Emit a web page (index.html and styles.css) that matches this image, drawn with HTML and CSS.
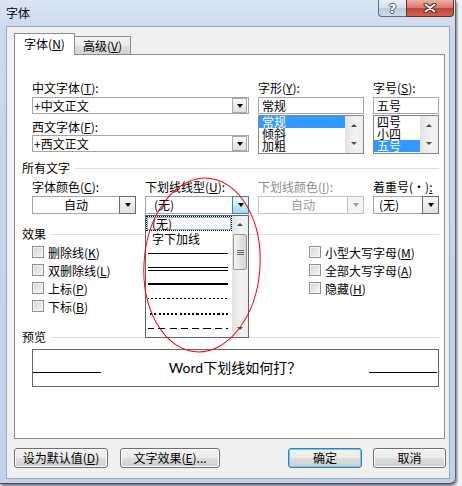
FILE: index.html
```html
<!DOCTYPE html>
<html lang="zh-CN">
<head>
    <meta charset="UTF-8">
    <title>字体</title>
    <link rel="stylesheet" href="styles.css">
</head>
<body>

    <!-- Dialog window -->
    <div class="window">
        <div class="titlebar">
            <span class="title">字体</span>
            <div class="caption-btns">
                <span class="cap-btn help">?</span>
                <span class="cap-btn close">
                    <svg width="14" height="10" viewBox="0 0 14 10">
                        <path d="M2.5 1.5 L11.5 8.5 M11.5 1.5 L2.5 8.5" stroke="#5a1d16" stroke-width="4" stroke-linecap="round"/>
                        <path d="M2.5 1.5 L11.5 8.5 M11.5 1.5 L2.5 8.5" stroke="#fff" stroke-width="2" stroke-linecap="round"/>
                    </svg>
                </span>
            </div>
        </div>

        <div class="client">
            <div class="tabs">
                <span class="tab active">字体(<u>N</u>)</span>
                <span class="tab">高级(<u>V</u>)</span>
            </div>

            <div class="panel">
                <!-- Font name / style / size -->
                <div class="fields">
                    <div class="col-wide">
                        <label class="lbl">中文字体(<u>T</u>):</label>
                        <div class="combo gap1"><span class="combo-val">+中文正文</span><span class="drop"></span></div>
                        <label class="lbl second">西文字体(<u>F</u>):</label>
                        <div class="combo"><span class="combo-val">+西文正文</span><span class="drop"></span></div>
                    </div>
                    <div class="col">
                        <label class="lbl">字形(<u>Y</u>):</label>
                        <div class="textbox">常规</div>
                        <div class="listbox">
                            <div class="list-items">
                                <div class="list-item selected">常规</div>
                                <div class="list-item">倾斜</div>
                                <div class="list-item">加粗</div>
                            </div>
                            <div class="scrollbar">
                                <span class="sb-btn"><i class="arrow-up"></i></span>
                                <span class="sb-btn"><i class="arrow-down"></i></span>
                            </div>
                        </div>
                    </div>
                    <div class="col">
                        <label class="lbl">字号(<u>S</u>):</label>
                        <div class="textbox">五号</div>
                        <div class="listbox">
                            <div class="list-items">
                                <div class="list-item">四号</div>
                                <div class="list-item">小四</div>
                                <div class="list-item selected">五号</div>
                            </div>
                            <div class="scrollbar">
                                <span class="sb-btn"><i class="arrow-up"></i></span>
                                <span class="sb-btn"><i class="arrow-down"></i></span>
                            </div>
                        </div>
                    </div>
                </div>

                <!-- All text -->
                <div class="section first">所有文字</div>
                <div class="fields attrs">
                    <div class="col">
                        <label class="lbl">字体颜色(<u>C</u>):</label>
                        <div class="combo tall gap1"><span class="combo-val center">自动</span><span class="drop"></span></div>
                    </div>
                    <div class="col">
                        <label class="lbl">下划线线型(<u>U</u>):</label>
                        <div class="combo tall gap1"><span class="combo-val pad9">(无)</span><span class="drop hot"></span></div>
                    </div>
                    <div class="col">
                        <label class="lbl disabled">下划线颜色(<u>I</u>):</label>
                        <div class="combo tall gap1 off"><span class="combo-val center">自动</span><span class="drop"></span></div>
                    </div>
                    <div class="col">
                        <label class="lbl">着重号(·)<u>:</u></label>
                        <div class="combo tall gap1"><span class="combo-val pad5">(无)</span><span class="drop"></span></div>
                    </div>
                </div>

                <!-- Effects -->
                <div class="section effects-title">效果</div>
                <div class="effects">
                    <div class="check"><span class="box"></span><span>删除线(<u>K</u>)</span></div>
                    <div class="check"><span class="box"></span><span>双删除线(<u>L</u>)</span></div>
                    <div class="check"><span class="box"></span><span>上标(<u>P</u>)</span></div>
                    <div class="check"><span class="box"></span><span>下标(<u>B</u>)</span></div>
                    <div class="check"><span class="box"></span><span>小型大写字母(<u>M</u>)</span></div>
                    <div class="check"><span class="box"></span><span>全部大写字母(<u>A</u>)</span></div>
                    <div class="check"><span class="box"></span><span>隐藏(<u>H</u>)</span></div>
                </div>

                <!-- Preview -->
                <div class="section preview-title">预览</div>
                <div class="preview">
                    <span class="pv-line"></span>
                    <span class="pv-text">Word下划线如何打？</span>
                    <span class="pv-line"></span>
                </div>

                <!-- Open underline style list -->
                <div class="ddlist">
                    <div class="ddl-items">
                        <div class="ddl-item focus">(无)</div>
                        <div class="ddl-item">字下加线</div>
                        <div class="ddl-item"><span class="ln single"></span></div>
                        <div class="ddl-item"><span class="ln double"></span></div>
                        <div class="ddl-item"><span class="ln thick"></span></div>
                        <div class="ddl-item"><span class="ln dotted"></span></div>
                        <div class="ddl-item"><span class="ln heavy-dotted"></span></div>
                        <div class="ddl-item"><span class="ln dashed"></span></div>
                    </div>
                    <div class="ddl-scroll">
                        <span class="ds-btn"><i class="arrow-up"></i></span>
                        <span class="thumb"><i></i><i></i><i></i></span>
                        <span class="ds-track"></span>
                        <span class="ds-btn"><i class="arrow-down"></i></span>
                    </div>
                </div>
            </div>

            <div class="buttons">
                <span class="btn">设为默认值(<u>D</u>)</span>
                <span class="btn wide">文字效果(<u>E</u>)...</span>
                <span class="spacer"></span>
                <span class="btn ok default">确定</span>
                <span class="btn ok">取消</span>
            </div>
        </div>
    </div>

    <!-- Red hand-drawn circle -->
    <svg class="markup" width="462" height="486" viewBox="0 0 462 486">
        <ellipse cx="202" cy="265" rx="58" ry="87" transform="rotate(4 202 265)" fill="none" stroke="#ff0000" stroke-width="1"/>
    </svg>

</body>
</html>
```

FILE: styles.css
```css
/* Reset */
* { margin: 0; padding: 0; box-sizing: border-box; }

body {
    width: 462px;
    height: 486px;
    overflow: hidden;
    position: relative;
    background: #f3f4f6;
    font-family: "Noto Sans CJK SC", sans-serif;
    font-size: 12px;
    color: #000;
}

u { text-decoration: underline; text-underline-offset: 1px; }

/* Window frame */
.window {
    width: 456px;
    height: 484px;
    background: linear-gradient(#dbe6f4, #c9d9ed 30px, #c0d3ea);
    border-right: 1px solid #53657b;
    border-bottom: 1px solid #3d4a5a;
    border-bottom-right-radius: 6px;
    box-shadow: 1px 2px 3px rgba(0, 0, 0, 0.55);
}

.titlebar {
    height: 26px;
    display: flex;
    justify-content: space-between;
    align-items: flex-start;
}

.title { padding-left: 6px; line-height: 25px; }

.caption-btns { display: flex; margin-right: 1px; }

.cap-btn {
    height: 17px;
    display: flex;
    align-items: center;
    justify-content: center;
    border: 1px solid #5d6e84;
    border-top: none;
}

.help {
    width: 28px;
    border-right: none;
    border-bottom-left-radius: 4px;
    background: linear-gradient(#e9eff7, #d3dfed 50%, #bccbe0 51%, #cbd9ea);
    color: #fff;
    font: bold 13px "DejaVu Sans", sans-serif;
    text-shadow: 1px 0 #47586e, -1px 0 #47586e, 0 1px #47586e, 0 -1px #47586e;
}

.close {
    width: 48px;
    border-color: #6f2c23;
    border-bottom-right-radius: 4px;
    background: linear-gradient(#eab0a6, #d77769 50%, #c14432 51%, #d1634e);
}

/* Client area */
.client {
    margin-left: 6px;
    width: 444px;
    height: 453px;
    padding: 6px 4px 0 7px;
    background: #f0f0f0;
    border: 1px solid #97aac1;
}

/* Tabs */
.tabs {
    display: flex;
    align-items: flex-end;
    height: 22px;
    margin-bottom: -1px;
}

.tab {
    width: 57px;
    height: 19px;
    margin-left: -1px;
    line-height: 17px;
    text-align: center;
    border: 1px solid #898c95;
    border-bottom: none;
    background: linear-gradient(#f3f3f3, #ebebeb 50%, #dedede 51%, #d4d4d4);
}

.tab.active {
    width: 61px;
    height: 22px;
    margin-left: 0;
    line-height: 20px;
    background: #fff;
    position: relative;
    z-index: 1;
}

/* Tab panel */
.panel {
    position: relative;
    height: 385px;
    padding: 25px 5px 0 7px;
    background: #fff;
    border: 1px solid #898c95;
}

.fields {
    display: grid;
    grid-template-columns: 104px 104px 106px 66px;
    column-gap: 9px;
    margin-left: 10px;
}

.col-wide { grid-column: span 2; }

.lbl { display: block; line-height: 16px; white-space: nowrap; }
.lbl.second { margin-top: 5px; }
.lbl.disabled { color: #8d8d8d; }

/* Combo boxes */
.combo {
    display: flex;
    height: 17px;
    border: 1px solid #a5a5a5;
    background: #fff;
}

.combo.gap1 { margin-top: 1px; }
.combo.tall { height: 18px; }

.combo-val { flex: 1; padding-left: 1px; line-height: 15px; white-space: nowrap; }
.combo.tall .combo-val { line-height: 16px; }
.combo-val.center { text-align: center; padding-left: 0; }
.combo-val.pad9 { padding-left: 8px; }
.combo-val.pad5 { padding-left: 5px; }

.drop {
    width: 15px;
    margin-right: 1px;
    display: flex;
    align-items: center;
    justify-content: center;
    border: 1px solid #a9a9a9;
    background: linear-gradient(#f7f7f7, #e0e0e0);
}

.drop::after {
    content: "";
    border-left: 3.5px solid transparent;
    border-right: 3.5px solid transparent;
    border-top: 4px solid #000;
}

.combo.tall .drop {
    width: 17px;
    margin: -1px -1px -1px 0;
    border-color: #6b6b6b;
}

.combo.tall .drop.hot {
    border-color: #3c7fb1;
    background: linear-gradient(#eaf6fd, #d9f0fc 50%, #bee6fd 51%, #a7d9f5);
}

.combo.off { border-color: #c3c3c3; color: #9a9a9a; }
.combo.tall.off .drop { border-color: #c3c3c3; background: #f4f4f4; }
.combo.off .drop::after { border-top-color: #a0a0a0; }

.textbox {
    height: 17px;
    margin-top: 1px;
    padding-left: 3px;
    line-height: 15px;
    border: 1px solid #a5a5a5;
    background: #fff;
}

/* List boxes */
.listbox {
    display: flex;
    height: 39px;
    margin-top: 1px;
    border: 1px solid #828790;
    background: #fff;
}

.list-items { flex: 1; }

.list-item { height: 12px; line-height: 12px; padding-left: 3px; }
.list-item.selected { background: #3399ff; color: #fff; }

.scrollbar {
    width: 18px;
    display: flex;
    flex-direction: column;
    background: linear-gradient(to right, #e2e2e2, #f3f3f3 60%, #ececec);
}

.sb-btn, .ds-btn {
    flex: 1;
    display: flex;
    align-items: center;
    justify-content: center;
}

.arrow-up, .arrow-down {
    display: block;
    border-left: 3px solid transparent;
    border-right: 3px solid transparent;
}

.arrow-up { border-bottom: 3px solid #4a4a4a; }
.arrow-down { border-top: 3px solid #4a4a4a; }

/* Section headings with rule */
.section {
    display: flex;
    align-items: center;
    line-height: 14px;
}

.section::after {
    content: "";
    flex: 1;
    height: 1px;
    margin-left: 5px;
    background: #d5dfe5;
}

.section.first { margin-top: 7px; }
.attrs { margin-top: 4px; }
.effects-title { margin-top: 13px; }
.preview-title { margin-top: 15px; }

/* Effect check boxes */
.effects {
    display: grid;
    grid-template-columns: 277px 1fr;
    grid-template-rows: repeat(4, 18px);
    grid-auto-flow: column;
    margin: 2px 0 0 10px;
}

.check { display: flex; align-items: center; gap: 4px; white-space: nowrap; }

.box {
    width: 12px;
    height: 12px;
    border: 1px solid #8f8f8f;
    background: linear-gradient(135deg, #d2d2d2, #f7f7f7);
    box-shadow: inset 0 0 0 1px #f4f4f4;
}

/* Preview */
.preview {
    display: flex;
    height: 38px;
    margin: 5px 0 0 10px;
    padding-right: 1px;
    border: 1px solid #646464;
    background: #fff;
}

.pv-line {
    width: 68px;
    height: 1px;
    margin-top: 22px;
    background: #000;
}

.pv-text {
    flex: 1;
    text-align: center;
    font-size: 14px;
    line-height: 36px;
    font-family: Lato, "Noto Sans CJK SC", sans-serif;
}

/* Open drop-down list */
.ddlist {
    position: absolute;
    left: 130px;
    top: 160px;
    width: 104px;
    height: 123px;
    display: flex;
    border: 1px solid #646464;
    background: #fff;
    z-index: 2;
}

.ddl-items { flex: 1; }

.ddl-item {
    height: 15px;
    line-height: 14px;
    padding-left: 6px;
    display: flex;
    align-items: center;
}

.ddl-item.focus {
    border: 1px dotted #000;
    box-shadow: inset 0 0 0 1px #7fb5ec;
    padding-left: 5px;
}

.ln { display: block; width: 80px; margin-left: -4px; }
.ln.single { height: 1px; background: #000; }
.ln.double { height: 4px; border-top: 1px solid #000; border-bottom: 1px solid #000; }
.ln.thick { height: 2px; background: #000; }
.ln.dotted { border-top: 1px dashed #000; border-image: repeating-linear-gradient(to right, #000 0 2px, transparent 2px 4px) 1; }
.ln.heavy-dotted { border-top: 2px solid #000; border-image: repeating-linear-gradient(to right, #000 0 2px, transparent 2px 4px) 2; }
.ln.dashed { border-top: 1px solid #000; border-image: repeating-linear-gradient(to right, #000 0 7px, transparent 7px 11px) 1; }

.ddl-scroll {
    width: 16px;
    display: flex;
    flex-direction: column;
    background: linear-gradient(to right, #e2e2e2, #f3f3f3 60%, #ececec);
}

.ddl-scroll .ds-btn { flex: none; height: 17px; }
.ds-track { flex: 1; }

.thumb {
    height: 36px;
    margin: 1px 1px 0;
    display: flex;
    flex-direction: column;
    align-items: center;
    justify-content: center;
    gap: 1px;
    border: 1px solid #979797;
    border-radius: 2px;
    background: linear-gradient(to right, #f4f4f4, #e4e4e4 50%, #d6d6d6);
}

.thumb i { display: block; width: 7px; height: 1px; background: #666; }

/* Dialog buttons */
.buttons {
    display: flex;
    gap: 12px;
    margin: 9px -1px 0 0;
}

.spacer { flex: 1; }

.btn {
    width: 94px;
    height: 20px;
    line-height: 18px;
    text-align: center;
    border: 1px solid #707070;
    border-radius: 3px;
    background: linear-gradient(#f2f2f2, #ebebeb 50%, #dddddd 51%, #cfcfcf);
    box-shadow: inset 0 0 0 1px #fbfbfb;
    white-space: nowrap;
}

.btn.wide { width: 100px; }
.btn.ok { width: 73px; }

.btn.default {
    width: 74px;
    margin-right: -1px;
    border-color: #3c7fb1;
    box-shadow: inset 0 0 0 1px #6cc9f2;
}

/* Annotation overlay */
.markup {
    position: absolute;
    left: 0;
    top: 0;
    pointer-events: none;
    z-index: 5;
}
```
